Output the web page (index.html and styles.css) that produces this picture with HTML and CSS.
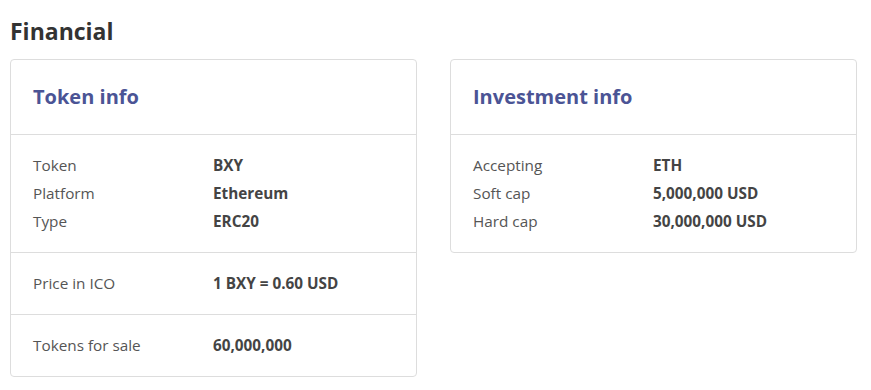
FILE: index.html
```html
<!DOCTYPE html>
<html>
<head>
<meta charset="utf-8">
<link rel="stylesheet" href="styles.css">
</head>
<body>
<h2 class="page-title">Financial</h2>
<div class="cards">
  <div class="card">
    <div class="card-head"><h3 class="card-title">Token info</h3></div>
    <div class="card-section">
      <div class="row"><span class="label">Token</span><span class="value">BXY</span></div>
      <div class="row"><span class="label">Platform</span><span class="value">Ethereum</span></div>
      <div class="row"><span class="label">Type</span><span class="value">ERC20</span></div>
    </div>
    <div class="card-section">
      <div class="row"><span class="label">Price in ICO</span><span class="value">1 BXY = 0.60 USD</span></div>
    </div>
    <div class="card-section">
      <div class="row"><span class="label">Tokens for sale</span><span class="value">60,000,000</span></div>
    </div>
  </div>
  <div class="card">
    <div class="card-head"><h3 class="card-title">Investment info</h3></div>
    <div class="card-section">
      <div class="row"><span class="label">Accepting</span><span class="value">ETH</span></div>
      <div class="row"><span class="label">Soft cap</span><span class="value">5,000,000 USD</span></div>
      <div class="row"><span class="label">Hard cap</span><span class="value">30,000,000 USD</span></div>
    </div>
  </div>
</div>
</body>
</html>
```
FILE: styles.css
```css
html, body {
  margin: 0;
  padding: 0;
  background: #fff;
}
body {
  font-family: "Open Sans", "Liberation Sans", sans-serif;
  color: #555;
  padding: 0 10px;
}
.page-title {
  margin: 0;
  padding-top: 15px;
  height: 59px;
  box-sizing: border-box;
  font-size: 23px;
  font-weight: 700;
  line-height: 32px;
  color: #333;
}
.cards {
  display: grid;
  grid-template-columns: 407px 407px;
  column-gap: 33px;
  align-items: start;
}
.card {
  border: 1px solid #ddd;
  border-radius: 4px;
  background: #fff;
}
.card-head {
  height: 74px;
  border-bottom: 1px solid #ddd;
  display: flex;
  align-items: center;
  padding: 0 22px;
}
.card-title {
  margin: 0;
  font-size: 20px;
  font-weight: 700;
  color: #4b5495;
  line-height: 28px;
}
.card-section {
  padding: 16px 22px 17px;
  border-bottom: 1px solid #ddd;
}
.card-section:last-child {
  border-bottom: none;
}
.row {
  display: flex;
  height: 28px;
  align-items: center;
  font-size: 15.3px;
}
.label {
  width: 180px;
  color: #555;
}
.value {
  font-weight: 700;
  color: #444;
}
```
